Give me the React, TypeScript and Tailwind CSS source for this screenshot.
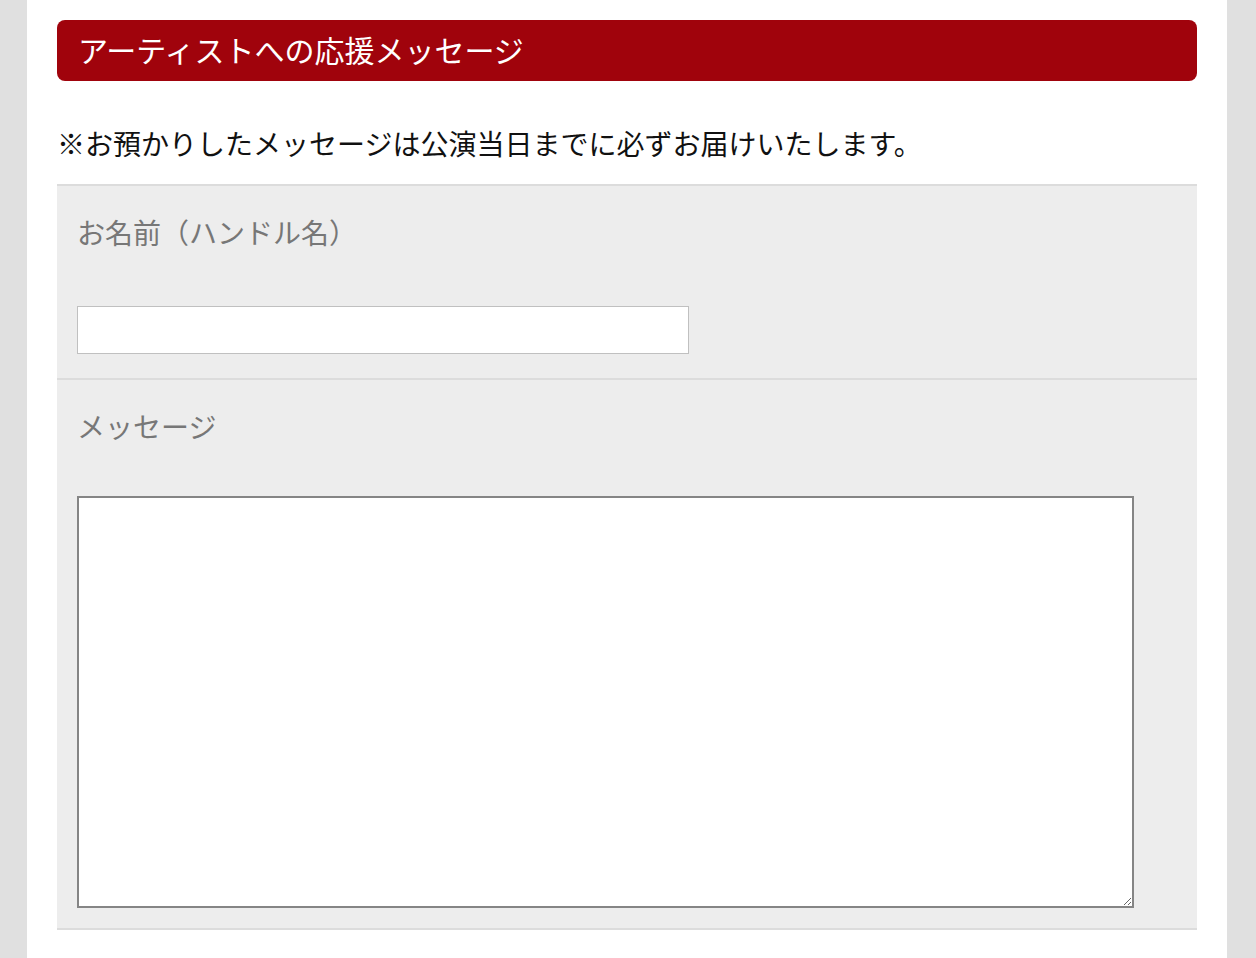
export default function App() {
  return (
    <div
      className="min-h-screen bg-[#e0e0e0]"
      style={{ fontFamily: '"Noto Sans CJK JP", "Noto Sans", sans-serif' }}
    >
      <div className="ml-[27px] mr-[29px] min-h-[958px] bg-white px-[30px] pt-[20px]">
        <h2 className="flex h-[61px] items-center rounded-[8px] bg-[#a0030c] px-[21px] pb-[3px] text-[30px] leading-none text-white">
          アーティストへの応援メッセージ
        </h2>

        <p className="mt-[42px] text-[28px] leading-[40px] text-[#111]">
          ※お預かりしたメッセージは公演当日までに必ずお届けいたします。
        </p>

        <div className="mt-[21px] border-t-2 border-[#dcdcdc] bg-[#ededed]">
          {/* お名前 */}
          <div className="border-b-2 border-[#dcdcdc] px-[20px] pt-[26px] pb-[24px]">
            <label className="block text-[28px] leading-[40px] text-[#777]">
              お名前（ハンドル名）
            </label>
            <input
              type="text"
              className="mt-[54px] block h-[48px] w-[612px] border border-[#c0c0c0] bg-white px-2 text-[20px] outline-none"
            />
          </div>

          {/* メッセージ */}
          <div className="border-b-2 border-[#dcdcdc] px-[20px] pt-[26px] pb-[20px]">
            <label className="block text-[28px] leading-[40px] text-[#777]">
              メッセージ
            </label>
            <textarea className="mt-[50px] block h-[412px] w-[1057px] border-2 border-[#858585] bg-white p-2 text-[20px] outline-none" />
          </div>
        </div>
      </div>
    </div>
  );
}
